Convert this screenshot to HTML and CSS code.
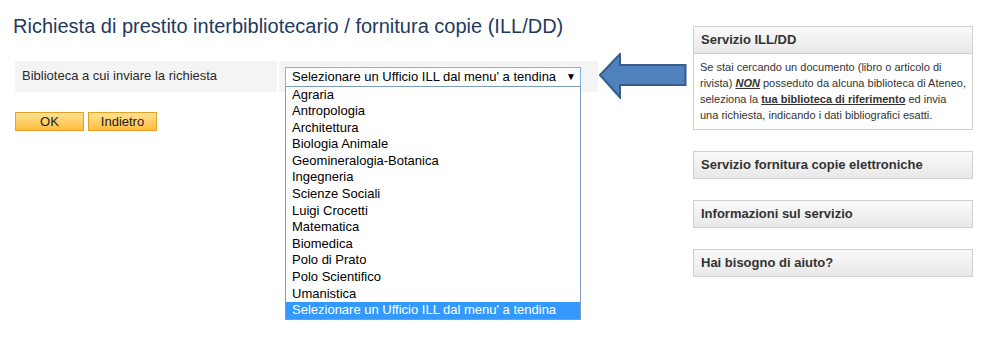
FILE: index.html
```html
<!DOCTYPE html>
<html lang="it">
<head>
<meta charset="utf-8">
<title>Richiesta ILL/DD</title>
<link rel="stylesheet" href="styles.css">
</head>
<body>
<div class="page">
  <main class="main">
    <h1 class="title">Richiesta di prestito interbibliotecario / fornitura copie (ILL/DD)</h1>
    <div class="form-row">
      <div class="cell label-cell">Biblioteca a cui inviare la richiesta</div>
      <div class="cell value-cell">
        <div class="select-wrap">
          <div class="select">
            <span class="select-text">Selezionare un Ufficio ILL dal menu' a tendina</span>
            <span class="select-caret">&#9660;</span>
          </div>
          <ul class="options">
            <li>Agraria</li>
            <li>Antropologia</li>
            <li>Architettura</li>
            <li>Biologia Animale</li>
            <li>Geomineralogia-Botanica</li>
            <li>Ingegneria</li>
            <li>Scienze Sociali</li>
            <li>Luigi Crocetti</li>
            <li>Matematica</li>
            <li>Biomedica</li>
            <li>Polo di Prato</li>
            <li>Polo Scientifico</li>
            <li>Umanistica</li>
            <li class="selected">Selezionare un Ufficio ILL dal menu' a tendina</li>
          </ul>
        </div>
      </div>
      <svg class="arrow" width="88" height="46" viewBox="0 0 88 46" aria-hidden="true">
        <path d="M1 22 L21 1 L21 12 L86.5 12 L86.5 32 L21 32 L21 44.5 Z" fill="#4f81bd" stroke="#385d8a" stroke-width="2" stroke-linejoin="miter"/>
      </svg>
    </div>
    <div class="buttons">
      <button class="btn" type="button">OK</button>
      <button class="btn" type="button">Indietro</button>
    </div>
  </main>
  <aside class="sidebar">
    <section class="panel">
      <h2 class="panel-head">Servizio ILL/DD</h2>
      <div class="panel-body">Se stai cercando un documento (libro o articolo di<br>rivista) <a class="non">NON</a> posseduto da alcuna biblioteca di Ateneo,<br>seleziona la <a class="ref">tua biblioteca di riferimento</a> ed invia<br>una richiesta, indicando i dati bibliografici esatti.</div>
    </section>
    <section class="panel">
      <h2 class="panel-head">Servizio fornitura copie elettroniche</h2>
    </section>
    <section class="panel">
      <h2 class="panel-head">Informazioni sul servizio</h2>
    </section>
    <section class="panel">
      <h2 class="panel-head">Hai bisogno di aiuto?</h2>
    </section>
  </aside>
</div>
</body>
</html>
```
FILE: styles.css
```css
html, body {
  margin: 0;
  padding: 0;
  background: #fff;
}
body {
  min-height: 342px;
  font-family: "Liberation Sans", Arial, sans-serif;
  color: #333;
}
.page {
  display: flex;
  align-items: flex-start;
  min-height: 342px;
}
.main {
  flex: none;
  width: 678px;
  padding-left: 15px;
  display: flex;
  flex-direction: column;
  align-items: flex-start;
}
.title {
  margin: 14px 0 0 -2px;
  font-size: 20px;
  line-height: 24px;
  font-weight: normal;
  color: #1f3a5e;
}
.form-row {
  margin-top: 15px;
  display: flex;
  align-items: center;
  gap: 2px;
}
.cell {
  background: #f4f4f4;
  height: 31px;
  box-sizing: border-box;
}
.label-cell {
  width: 262px;
  padding-left: 7px;
  font-size: 13px;
  line-height: 30px;
  color: #2b2b2b;
}
.value-cell {
  width: 319px;
  padding: 6px 0 0 6px;
}
.select-wrap {
  position: relative;
  width: 296px;
}
.select {
  box-sizing: border-box;
  height: 20px;
  border: 1px solid #7eb4ea;
  background: #fff;
  display: flex;
  align-items: center;
  justify-content: space-between;
  padding: 0 4px 0 6px;
  font-size: 13px;
  color: #000;
}
.select-caret {
  font-size: 10px;
  color: #000;
}
.options {
  position: absolute;
  left: 0;
  top: 19px;
  z-index: 2;
  box-sizing: border-box;
  width: 296px;
  margin: 0;
  padding: 0;
  list-style: none;
  background: #fff;
  border: 1px solid #7f9db9;
  font-size: 13px;
  color: #000;
}
.options li {
  height: 16.6px;
  line-height: 16.6px;
  padding-left: 6px;
  white-space: nowrap;
}
.options li.selected {
  background: #3399ff;
  color: #fff;
}
.arrow {
  display: block;
  margin-left: -1px;
}
.buttons {
  margin-top: 13px;
  display: flex;
  gap: 4px;
}
.btn {
  width: 69px;
  height: 19px;
  padding: 0;
  border: 1px solid #e6a124;
  background: linear-gradient(#ffe393, #ffbd3e);
  font-family: "Liberation Sans", Arial, sans-serif;
  font-size: 13px;
  color: #222;
  line-height: 17px;
}
.sidebar {
  flex: none;
  width: 280px;
  margin-top: 26px;
  display: flex;
  flex-direction: column;
  gap: 21px;
}
.panel {
  border: 1px solid #d0d0d0;
  background: #fff;
}
.panel-head {
  margin: 0;
  height: 26px;
  line-height: 26px;
  padding: 0 7px;
  font-size: 13px;
  font-weight: bold;
  color: #333;
  background: linear-gradient(#fafafa, #e8e8e8);
}
.panel-body {
  border-top: 1px solid #d0d0d0;
  padding: 5px 0 6px 6px;
  font-size: 11px;
  line-height: 16px;
  color: #333;
  white-space: nowrap;
}
.panel-body a {
  color: #333;
  font-weight: bold;
  text-decoration: underline;
}
.panel-body .non {
  font-style: italic;
}
```
